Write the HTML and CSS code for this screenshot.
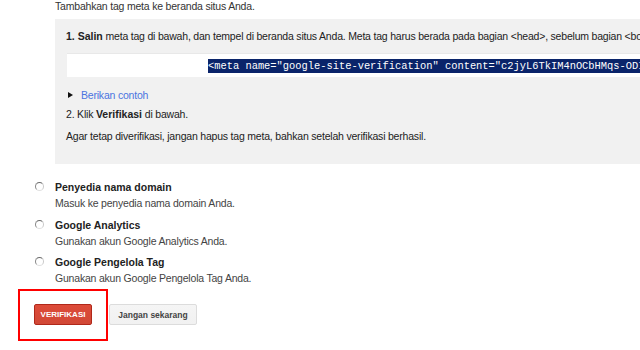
FILE: index.html
```html
<!DOCTYPE html>
<html>
<head>
<meta charset="utf-8">
<link rel="stylesheet" href="styles.css">
</head>
<body>
<div class="page">
  <p class="intro">Tambahkan tag meta ke beranda situs Anda.</p>
  <div class="panel">
    <p class="step1"><b>1. Salin</b> meta tag di bawah, dan tempel di beranda situs Anda. Meta tag harus berada pada bagian &lt;head&gt;, sebelum bagian &lt;body&gt; pertama.</p>
    <div class="metabox"><span class="sel">&lt;meta name="google-site-verification" content="c2jyL6TkIM4nOCbHMqs-ODIxyz" /&gt;</span></div>
    <div class="example"><span class="tri"></span><a class="link">Berikan contoh</a></div>
    <p class="step2">2. Klik <b>Verifikasi</b> di bawah.</p>
    <p class="note">Agar tetap diverifikasi, jangan hapus tag meta, bahkan setelah verifikasi berhasil.</p>
  </div>
  <div class="options">
    <div class="opt">
      <span class="radio"></span>
      <div class="otext"><div class="otitle">Penyedia nama domain</div><div class="osub">Masuk ke penyedia nama domain Anda.</div></div>
    </div>
    <div class="opt">
      <span class="radio"></span>
      <div class="otext"><div class="otitle">Google Analytics</div><div class="osub">Gunakan akun Google Analytics Anda.</div></div>
    </div>
    <div class="opt">
      <span class="radio"></span>
      <div class="otext"><div class="otitle">Google Pengelola Tag</div><div class="osub">Gunakan akun Google Pengelola Tag Anda.</div></div>
    </div>
  </div>
  <div class="actions">
    <div class="highlight"><button class="btn-red">VERIFIKASI</button></div>
    <button class="btn-gray">Jangan sekarang</button>
  </div>
</div>
</body>
</html>
```
FILE: styles.css
```css
html, body {
  margin: 0;
  padding: 0;
  background: #fff;
  overflow: hidden;
  width: 640px;
  height: 350px;
}
.page {
  font-family: "Liberation Sans", Arial, sans-serif;
  font-size: 10.5px;
  letter-spacing: -0.2px;
  color: #222;
  width: 800px;
}
p { margin: 0; }
.intro {
  margin-left: 55px;
  line-height: 12px;
  height: 19px;
  color: #333;
}
.panel {
  margin-left: 55px;
  background: #f1f1f1;
  padding: 10px 0 0 11px;
  height: 135px;
  white-space: nowrap;
}
.step1 { line-height: 14px; color: #222; }
.step1 b { color: #222; letter-spacing: 0; }
.metabox {
  margin-top: 10px;
  margin-left: 1px;
  background: #fff;
  height: 24px;
  border-top: 1px solid #e8e8e8;
  box-sizing: border-box;
  padding: 5px 0 0 141px;
  font-family: "Liberation Mono", "Courier New", monospace;
  font-size: 10.4px;
  letter-spacing: 0;
}
.sel {
  background: #0a246a;
  color: #fff;
  line-height: 14px;
  display: inline-block;
}
.example {
  margin-top: 12px;
  display: flex;
  align-items: center;
  height: 12px;
}
.tri {
  width: 0; height: 0;
  border-left: 5px solid #111;
  border-top: 3.5px solid transparent;
  border-bottom: 3.5px solid transparent;
  margin-left: 2px;
  margin-right: 8px;
}
.link { color: #4a74e0; }
.step2 { margin-top: 6px; line-height: 14px; }
.step2 b { letter-spacing: 0; }
.note { margin-top: 8px; line-height: 14px; }
.options {
  margin-top: 17px;
}
.opt {
  display: flex;
  margin-left: 35px;
  height: 37.5px;
}
.radio {
  width: 7px; height: 7px;
  border: 1px solid;
  border-color: #6a6a6a #c8c8c8 #e0e0e0 #8a8a8a;
  border-radius: 50%;
  margin-top: 1px;
  margin-right: 11px;
  background: #fff;
}
.otitle { font-weight: bold; line-height: 12px; color: #222; letter-spacing: 0; }
.osub { line-height: 14px; margin-top: 3px; color: #444; }
.actions {
  display: flex;
  align-items: center;
  margin-top: -5px;
}
.highlight {
  margin-left: 18px;
  width: 86px;
  height: 48px;
  border: 2px solid #f00;
  display: flex;
  align-items: center;
  justify-content: center;
  box-sizing: content-box;
}
.btn-red {
  width: 58px; height: 21px;
  background: linear-gradient(#dd4b39, #d14836);
  border: 1px solid #b0281a;
  border-radius: 2px;
  color: #fff;
  font-family: "Liberation Sans", Arial, sans-serif;
  font-weight: bold;
  font-size: 8px;
  letter-spacing: 0;
  padding: 0;
  margin-left: 0;
}
.btn-gray {
  margin-left: 1px;
  height: 21px;
  width: 88px;
  background: linear-gradient(#f5f5f5, #f1f1f1);
  border: 1px solid #dcdcdc;
  border-radius: 2px;
  color: #444;
  font-family: "Liberation Sans", Arial, sans-serif;
  font-weight: bold;
  font-size: 8.5px;
  letter-spacing: 0;
  padding: 0;
}
```
